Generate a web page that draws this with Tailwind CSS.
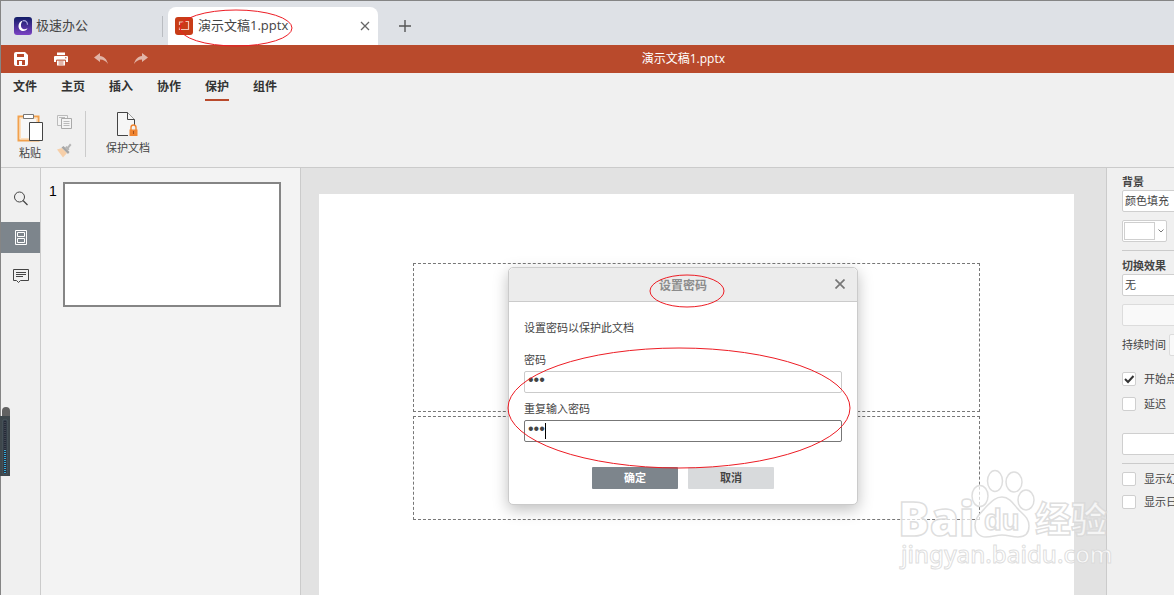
<!DOCTYPE html>
<html lang="zh-CN">

<head>
  <meta charset="UTF-8" />
  <meta name="viewport" content="width=device-width, initial-scale=1.0" />
  <title>演示文稿1.pptx</title>
  <script src="https://cdn.jsdelivr.net/npm/@tailwindcss/browser@4"></script>
</head>

<body class="h-screen overflow-hidden bg-[#f0f0f0] font-['Liberation_Sans','Noto_Sans_CJK_SC',sans-serif] text-[11px] text-[#444]">
  <div class="relative flex h-full flex-col border-t border-l border-[#858585]">

    <!-- 标签栏 -->
    <nav class="flex h-11 shrink-0 items-end bg-[#dee1e6] font-['Open_Sans','Noto_Sans_CJK_SC',sans-serif] text-[13px]">
      <a href="#" class="flex h-[38px] w-[161px] items-center gap-1 pl-[13px]">
        <svg class="size-[18px]" viewBox="0 0 18 18">
          <defs>
            <linearGradient id="brand" x1="0" y1="0" x2="0" y2="1">
              <stop offset="0" stop-color="#111c66" />
              <stop offset="1" stop-color="#7b42c4" />
            </linearGradient>
          </defs>
          <rect width="18" height="18" rx="3" fill="url(#brand)" />
          <path d="M9 3.500C6 4 4.500 6.500 4.500 9c0 3 2 5 4.800 5 2 0 3.500-1 4.200-2.800-1.500 1-3 1.300-4.300.8C6.500 11 6 6.500 9 3.500z" fill="#fff" />
          <path d="M9 3.800c3-.5 4.500 1.500 4.500 4" fill="none" stroke="#a9a4dc" stroke-width="1.200" />
        </svg>
        极速办公
      </a>
      <div class="mr-[5px] mb-2 h-[21px] w-px bg-[#b9bcc1]"></div>
      <div class="flex h-[38px] w-[210px] items-center rounded-t-lg bg-white px-[7px]">
        <svg class="size-[18px]" viewBox="0 0 18 18">
          <rect width="18" height="18" rx="3" fill="#c83c17" />
          <path d="M4.500 8v-3h4M10.500 4.500h3v8h-9v-2" fill="none" stroke="#f3c6b8" stroke-width="1.200" />
        </svg>
        <span class="ml-[5px] flex-1">演示文稿1.pptx</span>
        <button type="button" aria-label="关闭标签" class="p-[1px]">
          <svg class="size-2.5" viewBox="0 0 10 10"><path d="M1 1l8 8M9 1l-8 8" stroke="#666" stroke-width="1.300" /></svg>
        </button>
      </div>
      <button type="button" aria-label="新建标签" class="ml-5 flex h-[38px] items-center">
        <svg class="size-[14px]" viewBox="0 0 14 14"><path d="M7 1v12M1 7h12" stroke="#555" stroke-width="1.400" /></svg>
      </button>
    </nav>

    <!-- 标题栏 -->
    <header class="flex h-7 shrink-0 items-center bg-[#b94a2c] text-white">
      <div class="flex flex-1 gap-[26px] pl-[13px]">
        <button type="button" aria-label="保存">
          <svg class="size-[14px]" viewBox="0 0 14 14">
            <path d="M2 0h9l3 3v9a2 2 0 0 1-2 2H2a2 2 0 0 1-2-2V2a2 2 0 0 1 2-2z" fill="#fff" />
            <path d="M3 2h7v3H3zM3 8h8v5H3z" fill="#b94a2c" />
            <path d="M5 9h3v4H5z" fill="#fff" />
          </svg>
        </button>
        <button type="button" aria-label="打印">
          <svg class="size-[14px]" viewBox="0 0 14 14">
            <path d="M3 .5h8v3H3zM1 4h12q1 0 1 1v5h-2.500V8h-9v2H0V5q0-1 1-1zM3 8.500h8v5H3z" fill="#fff" />
            <path d="M2.500 3.500h9M2.500 13.500V8h9v5.500M4.500 10h5M4.500 12h5" fill="none" stroke="#b94a2c" stroke-width=".8" />
            <path d="M11 5.800h1.500" stroke="#b94a2c" />
          </svg>
        </button>
        <button type="button" aria-label="撤销">
          <svg class="size-[14px]" viewBox="0 0 14 14"><path d="M0 5.500L6 1v3c4 .5 7 3.500 8 8-2-3-4.500-4.500-8-4.500V10z" fill="#e2b4a7" /></svg>
        </button>
        <button type="button" aria-label="重做">
          <svg class="size-[14px]" viewBox="0 0 14 14"><path d="M14 5.500L8 1v3C4 4.500 1 7.500 0 12c2-3 4.500-4.500 8-4.500V10z" fill="#e2b4a7" /></svg>
        </button>
      </div>
      <h1 class="font-['Open_Sans','Noto_Sans_CJK_SC',sans-serif] text-[12px]">演示文稿1.pptx</h1>
      <div class="w-[449px]"></div>
    </header>

    <!-- 菜单 -->
    <nav class="flex h-7 shrink-0 gap-6 pl-3 text-[12px] leading-[29px] font-bold text-[#333]">
      <a href="#">文件</a>
      <a href="#">主页</a>
      <a href="#">插入</a>
      <a href="#">协作</a>
      <a href="#" class="border-b-2 border-[#b94a2c]">保护</a>
      <a href="#">组件</a>
    </nav>

    <!-- 工具栏 -->
    <section class="flex h-[67px] shrink-0 items-start border-b border-[#cbcbcb]">
      <button type="button" class="ml-3 flex w-[34px] flex-col items-center pt-3">
        <svg class="h-[30px] w-7" viewBox="0 0 28 30">
          <path d="M2.500 3.500h20v24h-20z" fill="#fff" stroke="#f2a14d" stroke-width="2" />
          <path d="M4.500 5.500h16v20h-16z" fill="#f8f8f8" stroke="#fde0bf" />
          <path d="M7.500 1.500h10v4h-10z" fill="#fff" stroke="#777" />
          <path d="M13.500 9.500h13v18h-13z" fill="#fff" stroke="#444" />
        </svg>
        <span class="leading-5">粘贴</span>
      </button>
      <div class="ml-2.5 flex w-[28px] flex-col gap-3 pt-[13px]">
        <button type="button" aria-label="复制">
          <svg class="size-4" viewBox="0 0 16 16">
            <path d="M.5 1.500h10v10H.5z" fill="#f4f4f4" stroke="#bbb" />
            <path d="M4.500 4.500h10v10h-10z" fill="#f4f4f4" stroke="#aaa" />
            <path d="M6.500 7.500h6M6.500 9.500h6M6.500 11.500h6M2 3.500h6" stroke="#bbb" />
          </svg>
        </button>
        <button type="button" aria-label="格式刷">
          <svg class="size-4" viewBox="0 0 16 16">
            <path d="M0 7.500L5 6l5 5-4 4.500z" fill="#f6cfa9" />
            <path d="M4.500 5.500L6.500 4l6 6-1.500 2z" fill="#a5a5a5" />
            <path d="M8 5.500l1.500-1.500 1 .7L13 1.500l1.500 1.500-2.700 3.200.7 1L11 8.500z" fill="#b5b5b5" />
          </svg>
        </button>
      </div>
      <div class="mt-[10px] h-[46px] w-px bg-[#cbcbcb]"></div>
      <button type="button" class="ml-5 flex flex-col items-center pt-[11px]">
        <svg class="h-[26px] w-6" viewBox="0 0 24 26">
          <path d="M12 23.500H1.500V.5h10l7 7v6" fill="#f6f6f6" stroke="#444" />
          <path d="M11.500 .5v7h7" fill="#f6f6f6" stroke="#444" />
          <path d="M15 18v-2.500a2.500 2.500 0 0 1 5 0V18" fill="none" stroke="#ef8430" stroke-width="1.400" />
          <path d="M13.500 17.500h8v6.500h-8z" fill="#ef8430" />
          <path d="M17.500 19v3" stroke="#a6501a" />
        </svg>
        <span class="leading-5">保护文档</span>
      </button>
    </section>

    <main class="flex min-h-0 flex-1">
      <!-- 侧边栏 -->
      <aside class="flex w-10 shrink-0 flex-col border-r border-[#cbcbcb] pt-4">
        <button type="button" aria-label="查找" class="flex h-[30px] w-full items-center justify-center">
          <svg class="size-4" viewBox="0 0 16 16"><circle cx="6.500" cy="6" r="5" fill="none" stroke="#444" /><path d="M10 9.500l4.500 4.500" stroke="#444" stroke-width="1.200" /></svg>
        </button>
        <button type="button" aria-label="幻灯片" class="mt-2 flex h-[31px] w-full items-center justify-center bg-[#7d858c]">
          <svg class="h-[15px] w-3" viewBox="0 0 12 15" fill="none" stroke="#fff"><path d="M.5 .5h11v14H.5zM2.500 2.500h7v4h-7zM2.500 8.500h7v4h-7z" /></svg>
        </button>
        <button type="button" aria-label="批注" class="mt-2 flex h-[30px] w-full items-center justify-center">
          <svg class="size-4" viewBox="0 0 16 16" fill="none" stroke="#444"><path d="M.5 1.500h15v11H7.500L5.500 14.500 3.500 12.500h-3zM3 4.500h10M3 6.500h10M3 8.500h7" /></svg>
        </button>
      </aside>

      <!-- 缩略图 -->
      <section class="flex w-[260px] shrink-0 items-start border-r border-[#cbcbcb] bg-[#f3f3f3] pt-[14px]">
        <span class="w-[22px] pt-px pl-2 font-['Liberation_Sans'] text-[14px] leading-4 text-black">1</span>
        <div class="h-[125px] w-[218px] border-2 border-[#858585] bg-white"></div>
      </section>

      <!-- 画布 -->
      <section class="min-w-0 flex-1 overflow-hidden bg-[#e2e2e2] pt-[26px] pr-8 pl-[18px]">
        <div class="flex h-[425px] flex-col gap-1 bg-white px-[94px] pt-[69px]">
          <div class="h-[149px] border border-dashed border-[#777]"></div>
          <div class="h-[104px] border border-dashed border-[#777]"></div>
        </div>
      </section>

      <!-- 属性面板 -->
      <aside class="w-[68px] shrink-0 overflow-hidden border-l border-[#cbcbcb] pl-[15px]">
        <div class="w-[190px] pt-1.5">
          <label for="fill" class="block h-4 leading-4 font-bold">背景</label>
          <select id="fill" class="block h-[22px] w-full appearance-none rounded-xs border border-[#cfcfcf] bg-white px-[2px] pt-px">
            <option>颜色填充</option>
          </select>
          <button type="button" aria-label="背景颜色" class="mt-2 flex h-[22px] w-[45px] items-center gap-[3px] rounded-xs border border-[#cfcfcf] bg-white pl-px">
            <span class="h-[18px] w-[31px] border border-[#cfcfcf]"></span>
            <svg class="h-1 w-1.5" viewBox="0 0 6 4"><path d="M.5 .5L3 3 5.500 .5" fill="none" stroke="#777" /></svg>
          </button>
          <hr class="mt-2 border-[#cbcbcb]" />
          <label for="effect" class="mt-[7px] block h-4 leading-4 font-bold">切换效果</label>
          <select id="effect" class="block h-[22px] w-full appearance-none rounded-xs border border-[#cfcfcf] bg-white px-[2px] pt-px">
            <option>无</option>
          </select>
          <button type="button" aria-label="效果选项" disabled class="mt-2 block h-[22px] w-full rounded-xs border border-[#dcdcdc] bg-[#f9f9f9]"></button>
          <div class="mt-2 flex h-[22px] items-center gap-[3px]">
            <label for="duration" class="shrink-0">持续时间</label>
            <input id="duration" type="text" disabled class="h-[22px] w-20 rounded-xs border border-[#dcdcdc] bg-[#f9f9f9]" />
          </div>
          <div class="mt-4 flex h-[14px] items-center gap-2">
            <span class="grid">
              <input id="click" type="checkbox" checked class="col-start-1 row-start-1 size-[14px] appearance-none rounded-xs border border-[#cfcfcf] bg-white" />
              <svg class="pointer-events-none col-start-1 row-start-1 size-[14px]" viewBox="0 0 14 14"><path d="M3 7l3 3 5.500-6" fill="none" stroke="#333" stroke-width="2" /></svg>
            </span>
            <label for="click">开始点击</label>
          </div>
          <div class="mt-[11px] flex h-[14px] items-center gap-2">
            <input id="delay" type="checkbox" class="size-[14px] appearance-none rounded-xs border border-[#cfcfcf] bg-white" />
            <label for="delay">延迟</label>
          </div>
          <input type="text" aria-label="延迟时间" class="mt-[22px] block h-[22px] w-full rounded-xs border border-[#cfcfcf] bg-white" />
          <hr class="mt-2 border-[#cbcbcb]" />
          <div class="mt-2 flex h-[14px] items-center gap-2">
            <input id="number" type="checkbox" class="size-[14px] appearance-none rounded-xs border border-[#cfcfcf] bg-white" />
            <label for="number">显示幻灯片编号</label>
          </div>
          <div class="mt-[9px] flex h-[14px] items-center gap-2">
            <input id="date" type="checkbox" class="size-[14px] appearance-none rounded-xs border border-[#cfcfcf] bg-white" />
            <label for="date">显示日期和时间</label>
          </div>
        </div>
      </aside>
    </main>

    <!-- 设置密码 -->
    <form role="dialog" aria-labelledby="dialog-title" class="absolute top-[266px] left-[507px] w-[350px] rounded-[5px] border border-[#cbcbcb] bg-white shadow-[0_5px_15px_rgba(0,0,0,0.25)]">
      <div class="relative flex h-[34px] items-center justify-center rounded-t-[5px] border-b border-[#cbcbcb] bg-[#ececec]">
        <h2 id="dialog-title" class="pt-0.5 text-[12px] font-bold text-[#8c8c8c]">设置密码</h2>
        <button type="button" aria-label="关闭" class="absolute top-[11px] right-3">
          <svg class="size-2.5" viewBox="0 0 10 10"><path d="M.5 .5l9 9M9.500 .5l-9 9" stroke="#777" stroke-width="1.700" /></svg>
        </button>
      </div>
      <div class="px-[15px] pt-[18px] pb-[15px]">
        <p class="leading-4">设置密码以保护此文档</p>
        <label for="pwd" class="mt-4 block leading-4">密码</label>
        <input id="pwd" type="password" value="123" class="mt-[3px] block h-[22px] w-full rounded-xs border border-[#cbcbcb] px-[3px] pb-1 font-['Liberation_Sans'] text-[16px] leading-4" />
        <label for="pwd2" class="mt-2 block leading-4">重复输入密码</label>
        <div class="relative mt-[3px]">
          <input id="pwd2" type="password" value="123" class="block h-[22px] w-full rounded-xs border border-[#777] px-[3px] pb-1 font-['Liberation_Sans'] text-[16px] leading-4" />
          <span class="absolute top-[3px] left-[21px] h-4 w-px bg-black"></span>
        </div>
        <div class="mt-[25px] flex justify-center gap-2.5 font-bold">
          <button type="submit" class="h-[22px] w-[86px] rounded-[1px] bg-[#7d858c] text-white">确定</button>
          <button type="button" class="h-[22px] w-[86px] rounded-[1px] bg-[#d8dadc]">取消</button>
        </div>
      </div>
    </form>

    <!-- 左侧浮动条 -->
    <svg class="absolute top-[406px] -left-px h-[70px] w-2.5" viewBox="0 0 10 70">
      <path d="M2 10V4q0-4 4-4t4 4v6z" fill="#626262" />
      <path d="M0 9h10v60H0z" fill="#3e474c" />
      <path d="M3 13h4v54H3z" fill="#242a36" stroke="#596874" stroke-width=".6" />
      <path d="M5 15v28" stroke="#40434f" stroke-width="2" stroke-dasharray="1 1" />
      <path d="M5 43v23" stroke="#36a9d6" stroke-width="2" stroke-dasharray="1 1" />
    </svg>

    <!-- 水印 -->
    <svg class="pointer-events-none absolute top-[464px] left-[894px] h-[110px] w-[224px] overflow-visible" viewBox="0 0 224 110" fill="#fff" fill-opacity=".7" stroke="#d8d8d8" stroke-opacity=".85" stroke-width="1.500">
      <text x="3" y="71" font-family="Open Sans" font-weight="800" font-size="47">Bai</text>
      <ellipse cx="85" cy="31" rx="8" ry="10.500" />
      <ellipse cx="100" cy="16" rx="7.500" ry="10.500" />
      <ellipse cx="119" cy="17" rx="8" ry="10" />
      <ellipse cx="131" cy="35" rx="8" ry="10" />
      <path d="M107 32c7 0 11 6 15 11 5 6 12 9 12 18 0 7-4 11-11 11-6 0-10-2-16-2s-10 2-16 2c-7 0-11-5-11-12 0-8 6-12 11-18 5-5 9-10 16-10z" />
      <text x="89" y="65" font-family="Liberation Sans" font-weight="bold" font-size="29">du</text>
      <text x="140" y="68" font-family="Noto Sans CJK SC" font-weight="bold" font-size="36">经验</text>
      <text x="6" y="98" font-family="Noto Sans" font-weight="500" font-size="24" fill-opacity=".85" stroke-width="1">jingyan.baidu.com</text>
    </svg>

    <!-- 红色圈注 -->
    <svg class="pointer-events-none absolute -top-px -left-px size-full overflow-visible" fill="none" stroke="#ed1c24">
      <ellipse cx="236" cy="28" rx="56" ry="18" />
      <ellipse cx="687" cy="291" rx="37" ry="16" />
      <ellipse cx="679" cy="408" rx="171" ry="60" />
    </svg>
  </div>
</body>

</html>
